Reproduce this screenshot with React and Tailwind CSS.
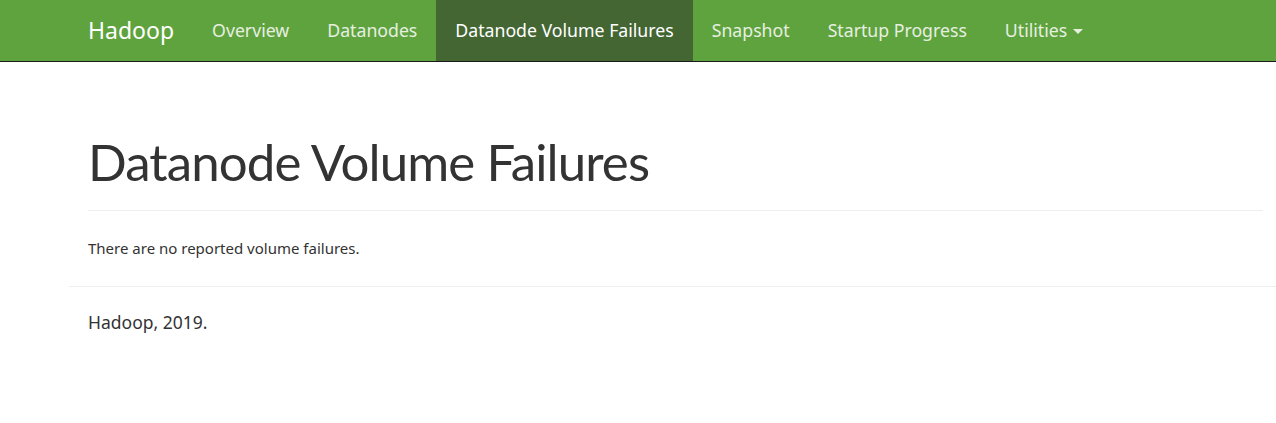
import React from "react";

const navItems = [
  { label: "Overview" },
  { label: "Datanodes" },
  { label: "Datanode Volume Failures", active: true },
  { label: "Snapshot" },
  { label: "Startup Progress" },
  { label: "Utilities", dropdown: true },
];

function Navbar() {
  return (
    <nav className="h-[62px] bg-[#5fa33e] border-b border-[#1a1a1a] flex items-stretch pl-[69px]">
      <a className="flex items-center px-[19px] text-[23px] text-white">Hadoop</a>
      <ul className="flex items-stretch">
        {navItems.map((item) => (
          <li key={item.label} className="flex">
            <a
              className={`flex items-center px-[19px] text-[17.7px] ${
                item.active ? "bg-[#446633] text-white" : "text-[#e6efe0]"
              }`}
            >
              {item.label}
              {item.dropdown && (
                <span className="ml-[6px] mt-[2px] inline-block w-0 h-0 border-x-[5px] border-x-transparent border-t-[5px] border-t-[#e6efe0]" />
              )}
            </a>
          </li>
        ))}
      </ul>
    </nav>
  );
}

export default function App() {
  return (
    <div className="min-h-[423px] bg-white text-[#333] font-['Noto_Sans',sans-serif]">
      <Navbar />
      <div className="pl-[88px] pr-[13px]">
        <h1 className="mt-[71px] pb-[20px] border-b border-[#eee] font-['Lato',sans-serif] text-[51px] tracking-[-0.9px] leading-[57px] font-normal">
          Datanode Volume Failures
        </h1>
        <p className="mt-[27px] text-[15px] leading-[21px]">There are no reported volume failures.</p>
      </div>
      <hr className="mt-[27px] ml-[69px] border-0 border-t border-[#eee]" />
      <p className="mt-[23px] pl-[88px] text-[17.5px] leading-[25px]">Hadoop, 2019.</p>
    </div>
  );
}
